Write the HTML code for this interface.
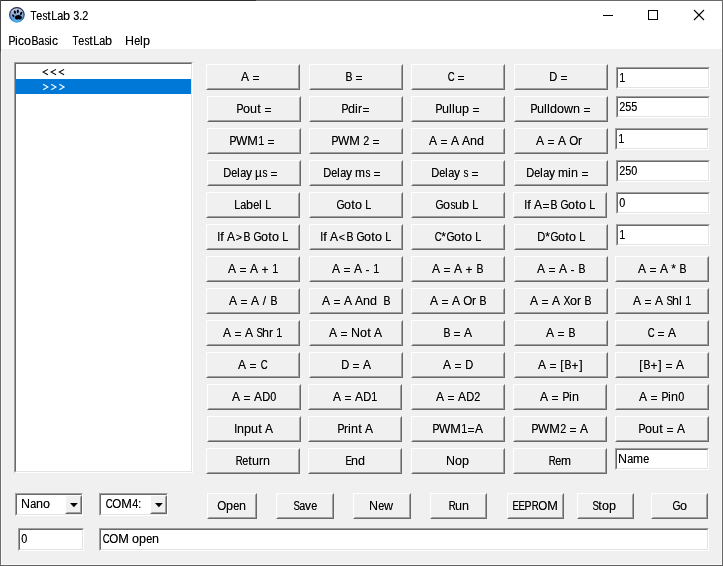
<!DOCTYPE html>
<html><head><meta charset="utf-8"><title>TestLab 3.2</title>
<style>
html,body{margin:0;padding:0;}
body{width:723px;height:566px;overflow:hidden;background:#f0f0f0;font-family:"Liberation Sans",sans-serif;font-size:12px;color:#000;position:relative;}
.abs{position:absolute;}
#win{position:absolute;left:0;top:0;width:723px;height:566px;will-change:transform;}
#title{position:absolute;left:1px;top:1px;width:721px;height:48px;background:#fff;}
.t{position:absolute;white-space:nowrap;line-height:14px;height:14px;text-shadow:0 0 0 rgba(0,0,0,.55);}
b{font-weight:normal;display:inline-block;text-align:center;overflow:visible;white-space:nowrap;}
.c32{width:3px}.c42{width:5px}.c43{width:8px;transform:translateY(0.8px)}.c45{width:5px;transform:translateY(0.8px)}.c46{width:3px;transform:scaleX(0.900)}.c47{width:5px}.c48{width:6px;transform:scaleX(0.899)}.c49{width:6px;transform:scaleX(0.899)}.c50{width:6px;transform:scaleX(0.899)}.c51{width:6px;transform:scaleX(0.899)}.c52{width:6px;transform:scaleX(0.899)}.c53{width:6px;transform:scaleX(0.899)}.c58{width:3px;transform:scaleX(0.900)}.c60{width:8px;transform:translateY(0.7px) scale(0.9)}.c61{width:8px;transform:translateY(0.8px)}.c62{width:8px;transform:translateY(0.7px) scale(0.9)}.c65{width:8px}.c66{width:7px;transform:scaleX(0.875)}.c67{width:7px;transform:scaleX(0.808)}.c68{width:8px;transform:scaleX(0.923)}.c69{width:6px;transform:scaleX(0.800)}.c71{width:8px;transform:scaleX(0.857)}.c72{width:9px;transform:scaleX(1.039)}.c73{width:3px;transform:scaleX(0.900)}.c76{width:6px;transform:scaleX(0.899)}.c77{width:11px;transform:scaleX(1.060)}.c78{width:9px;transform:scaleX(1.039)}.c79{width:9px;transform:scaleX(0.964)}.c80{width:7px;transform:scaleX(0.875)}.c82{width:7px;transform:scaleX(0.808)}.c83{width:6px;transform:scaleX(0.800)}.c84{width:6px;transform:scaleX(0.819)}.c87{width:11px}.c88{width:7px;transform:scaleX(0.875)}.c91{width:4px}.c93{width:4px}.c97{width:6px;transform:scaleX(0.899)}.c98{width:7px;transform:scaleX(1.049)}.c99{width:6px}.c100{width:7px;transform:scaleX(1.049)}.c101{width:6px;transform:scaleX(0.899)}.c102{width:4px;transform:scaleX(1.060)}.c104{width:7px;transform:scaleX(1.049)}.c105{width:3px;transform:scaleX(1.060)}.c108{width:3px;transform:scaleX(1.060)}.c109{width:10px}.c110{width:7px;transform:scaleX(1.049)}.c111{width:7px;transform:scaleX(1.049)}.c112{width:7px;transform:scaleX(1.049)}.c114{width:4px}.c115{width:5px;transform:scaleX(0.833)}.c116{width:4px;transform:scaleX(1.060)}.c117{width:7px;transform:scaleX(1.049)}.c118{width:6px}.c119{width:9px;transform:scaleX(1.039)}.c121{width:6px}.c181{width:7px}
.btn{position:absolute;box-sizing:border-box;background:#f0f0f0;border-top:1px solid #fff;border-left:1px solid #fff;border-right:1px solid #696969;border-bottom:1px solid #696969;}
.btn>i{position:absolute;left:0;top:0;right:0;bottom:0;border-right:1px solid #a0a0a0;border-bottom:1px solid #a0a0a0;border-top:1px solid #f0f0f0;border-left:1px solid #f0f0f0;display:block;}
.edit{position:absolute;box-sizing:border-box;background:#fff;border-top:1px solid #a0a0a0;border-left:1px solid #a0a0a0;border-right:1px solid #fff;border-bottom:1px solid #fff;}
.edit>i{position:absolute;left:0;top:0;right:0;bottom:0;border-top:1px solid #696969;border-left:1px solid #696969;border-right:1px solid #e3e3e3;border-bottom:1px solid #e3e3e3;display:block;}
</style></head><body>
<div id="win">
<div id="title"></div>

<div class="abs" style="left:0;top:0;width:723px;height:1px;background:#6a6a6a"></div>
<div class="abs" style="left:0;top:0;width:256px;height:1px;background:#303030"></div>
<div class="abs" style="left:0;top:0;width:1px;height:566px;background:#6d6d6d"></div>
<div class="abs" style="left:0;top:0;width:1px;height:52px;background:#4a4a4a"></div>
<div class="abs" style="left:1px;top:50px;width:1px;height:515px;background:#fafafa"></div>
<div class="abs" style="left:721px;top:50px;width:1px;height:515px;background:#fafafa"></div>
<div class="abs" style="left:1px;top:564px;width:721px;height:1px;background:#fafafa"></div>
<div class="abs" style="left:722px;top:0;width:1px;height:566px;background:#686868"></div>
<div class="abs" style="left:0;top:565px;width:723px;height:1px;background:#606060"></div>
<svg class="abs" style="left:8px;top:6px" width="18" height="18" viewBox="8 6 18 18">
<defs><linearGradient id="g" x1="0" y1="0" x2="0" y2="1"><stop offset="0" stop-color="#d6dce9"/><stop offset="0.42" stop-color="#93abd4"/><stop offset="0.78" stop-color="#5b9fe0"/><stop offset="1" stop-color="#55c8f6"/></linearGradient>
<linearGradient id="g2" x1="0" y1="0" x2="0" y2="1"><stop offset="0" stop-color="#1a2a4e"/><stop offset="0.6" stop-color="#21437f"/><stop offset="1" stop-color="#3a9fe0"/></linearGradient></defs>
<circle cx="16.9" cy="14.8" r="7.25" fill="url(#g)" stroke="url(#g2)" stroke-width="1.15"/>
<path d="M14.9 17.6C14.9 16 16.6 15.1 18.3 15.1C20.2 15.1 21.9 16.1 21.9 17.6C21.9 19 20.6 19.7 19.6 19.5C19 19.4 18.7 19.2 18.3 19.2C17.9 19.2 17.5 19.5 16.9 19.6C15.8 19.7 14.9 18.9 14.9 17.6Z" fill="#000"/>
<ellipse cx="13.3" cy="15.8" rx="0.95" ry="1.45" fill="#000" transform="rotate(-35 13.3 15.8)"/>
<ellipse cx="14.9" cy="12.1" rx="1.05" ry="1.75" fill="#000" transform="rotate(-12 14.9 12.1)"/>
<ellipse cx="17.8" cy="11.3" rx="1.05" ry="1.8" fill="#000" transform="rotate(6 17.8 11.3)"/>
<ellipse cx="21.1" cy="13.4" rx="1.05" ry="1.6" fill="#000" transform="rotate(30 21.1 13.4)"/>
</svg>
<div class="t" style="left:30px;top:9px;letter-spacing:-0.1px;"><b class="c84">T</b><b class="c101">e</b><b class="c115">s</b><b class="c116">t</b><b class="c76">L</b><b class="c97">a</b><b class="c98">b</b><b class="c32">&nbsp;</b><b class="c51">3</b><b class="c46">.</b><b class="c50">2</b></div>
<svg class="abs" style="left:590px;top:0px" width="132" height="30" viewBox="590 0 132 30">
<path d="M603 15.5H613" stroke="#000" stroke-width="1" fill="none"/>
<rect x="648.5" y="10.5" width="9" height="9" stroke="#000" stroke-width="1" fill="none"/>
<path d="M694 10L704 20M704 10L694 20" stroke="#000" stroke-width="1.1" fill="none"/>
</svg>
<div class="t" style="left:8px;top:34px;"><b class="c80">P</b><b class="c105">i</b><b class="c99">c</b><b class="c111">o</b><b class="c66">B</b><b class="c97">a</b><b class="c115">s</b><b class="c105">i</b><b class="c99">c</b></div>
<div class="t" style="left:72px;top:34px;"><b class="c84">T</b><b class="c101">e</b><b class="c115">s</b><b class="c116">t</b><b class="c76">L</b><b class="c97">a</b><b class="c98">b</b></div>
<div class="t" style="left:125px;top:34px;"><b class="c72">H</b><b class="c101">e</b><b class="c108">l</b><b class="c112">p</b></div>
<div class="edit" style="left:14px;top:62px;width:179px;height:411px;"><i></i></div>
<div class="abs" style="left:16px;top:79px;width:175px;height:14.5px;background:#0078d7"></div>
<svg class="abs" style="left:40px;top:66px" width="30" height="28" viewBox="40 66 30 28" fill="none" stroke-width="1.05" stroke-linecap="butt"><path d="M47.9 69.4L43.1 72.1L47.9 74.8" stroke="#000"/><path d="M43.1 84.3L47.9 87L43.1 89.7" stroke="#fff"/><path d="M56.0 69.4L51.2 72.1L56.0 74.8" stroke="#000"/><path d="M51.2 84.3L56.0 87L51.2 89.7" stroke="#fff"/><path d="M64.1 69.4L59.3 72.1L64.1 74.8" stroke="#000"/><path d="M59.3 84.3L64.1 87L59.3 89.7" stroke="#fff"/></svg>
<div class="btn" style="left:206px;top:64px;width:94px;height:26px;"><i></i></div>
<div class="t" style="left:241px;top:70px;"><b class="c65">A</b><b class="c32">&nbsp;</b><b class="c61">=</b></div>
<div class="btn" style="left:309px;top:64px;width:94px;height:26px;"><i></i></div>
<div class="t" style="left:345px;top:70px;"><b class="c66">B</b><b class="c32">&nbsp;</b><b class="c61">=</b></div>
<div class="btn" style="left:411px;top:64px;width:94px;height:26px;"><i></i></div>
<div class="t" style="left:447px;top:70px;"><b class="c67">C</b><b class="c32">&nbsp;</b><b class="c61">=</b></div>
<div class="btn" style="left:514px;top:64px;width:94px;height:26px;"><i></i></div>
<div class="t" style="left:549px;top:70px;"><b class="c68">D</b><b class="c32">&nbsp;</b><b class="c61">=</b></div>
<div class="edit" style="left:616px;top:67px;width:94px;height:22px;"><i></i></div>
<div class="t" style="left:619px;top:71px;"><b class="c49">1</b></div>
<div class="btn" style="left:207px;top:96px;width:94px;height:26px;"><i></i></div>
<div class="t" style="left:236px;top:102px;"><b class="c80">P</b><b class="c111">o</b><b class="c117">u</b><b class="c116">t</b><b class="c32">&nbsp;</b><b class="c61">=</b></div>
<div class="btn" style="left:309px;top:96px;width:94px;height:26px;"><i></i></div>
<div class="t" style="left:341px;top:102px;"><b class="c80">P</b><b class="c100">d</b><b class="c105">i</b><b class="c114">r</b><b class="c61">=</b></div>
<div class="btn" style="left:411px;top:96px;width:94px;height:26px;"><i></i></div>
<div class="t" style="left:435px;top:102px;"><b class="c80">P</b><b class="c117">u</b><b class="c108">l</b><b class="c108">l</b><b class="c117">u</b><b class="c112">p</b><b class="c32">&nbsp;</b><b class="c61">=</b></div>
<div class="btn" style="left:514px;top:96px;width:94px;height:26px;"><i></i></div>
<div class="t" style="left:530px;top:102px;"><b class="c80">P</b><b class="c117">u</b><b class="c108">l</b><b class="c108">l</b><b class="c100">d</b><b class="c111">o</b><b class="c119">w</b><b class="c110">n</b><b class="c32">&nbsp;</b><b class="c61">=</b></div>
<div class="edit" style="left:616px;top:96px;width:94px;height:22px;"><i></i></div>
<div class="t" style="left:619px;top:100px;"><b class="c50">2</b><b class="c53">5</b><b class="c53">5</b></div>
<div class="btn" style="left:207px;top:128px;width:94px;height:26px;"><i></i></div>
<div class="t" style="left:229px;top:134px;"><b class="c80">P</b><b class="c87">W</b><b class="c77">M</b><b class="c49">1</b><b class="c32">&nbsp;</b><b class="c61">=</b></div>
<div class="btn" style="left:309px;top:128px;width:94px;height:26px;"><i></i></div>
<div class="t" style="left:331px;top:134px;"><b class="c80">P</b><b class="c87">W</b><b class="c77">M</b><b class="c32">&nbsp;</b><b class="c50">2</b><b class="c32">&nbsp;</b><b class="c61">=</b></div>
<div class="btn" style="left:411px;top:128px;width:94px;height:26px;"><i></i></div>
<div class="t" style="left:429px;top:134px;"><b class="c65">A</b><b class="c32">&nbsp;</b><b class="c61">=</b><b class="c32">&nbsp;</b><b class="c65">A</b><b class="c32">&nbsp;</b><b class="c65">A</b><b class="c110">n</b><b class="c100">d</b></div>
<div class="btn" style="left:514px;top:128px;width:94px;height:26px;"><i></i></div>
<div class="t" style="left:536px;top:134px;"><b class="c65">A</b><b class="c32">&nbsp;</b><b class="c61">=</b><b class="c32">&nbsp;</b><b class="c65">A</b><b class="c32">&nbsp;</b><b class="c79">O</b><b class="c114">r</b></div>
<div class="edit" style="left:615px;top:128px;width:94px;height:22px;"><i></i></div>
<div class="t" style="left:618px;top:132px;"><b class="c49">1</b></div>
<div class="btn" style="left:207px;top:160px;width:94px;height:26px;"><i></i></div>
<div class="t" style="left:223px;top:166px;"><b class="c68">D</b><b class="c101">e</b><b class="c108">l</b><b class="c97">a</b><b class="c121">y</b><b class="c32">&nbsp;</b><b class="c181">µ</b><b class="c115">s</b><b class="c32">&nbsp;</b><b class="c61">=</b></div>
<div class="btn" style="left:309px;top:160px;width:94px;height:26px;"><i></i></div>
<div class="t" style="left:323px;top:166px;"><b class="c68">D</b><b class="c101">e</b><b class="c108">l</b><b class="c97">a</b><b class="c121">y</b><b class="c32">&nbsp;</b><b class="c109">m</b><b class="c115">s</b><b class="c32">&nbsp;</b><b class="c61">=</b></div>
<div class="btn" style="left:411px;top:160px;width:94px;height:26px;"><i></i></div>
<div class="t" style="left:431px;top:166px;"><b class="c68">D</b><b class="c101">e</b><b class="c108">l</b><b class="c97">a</b><b class="c121">y</b><b class="c32">&nbsp;</b><b class="c115">s</b><b class="c32">&nbsp;</b><b class="c61">=</b></div>
<div class="btn" style="left:514px;top:160px;width:94px;height:26px;"><i></i></div>
<div class="t" style="left:526px;top:166px;"><b class="c68">D</b><b class="c101">e</b><b class="c108">l</b><b class="c97">a</b><b class="c121">y</b><b class="c32">&nbsp;</b><b class="c109">m</b><b class="c105">i</b><b class="c110">n</b><b class="c32">&nbsp;</b><b class="c61">=</b></div>
<div class="edit" style="left:616px;top:160px;width:94px;height:22px;"><i></i></div>
<div class="t" style="left:619px;top:164px;"><b class="c50">2</b><b class="c53">5</b><b class="c48">0</b></div>
<div class="btn" style="left:206px;top:192px;width:94px;height:26px;"><i></i></div>
<div class="t" style="left:234px;top:198px;"><b class="c76">L</b><b class="c97">a</b><b class="c98">b</b><b class="c101">e</b><b class="c108">l</b><b class="c32">&nbsp;</b><b class="c76">L</b></div>
<div class="btn" style="left:309px;top:192px;width:94px;height:26px;"><i></i></div>
<div class="t" style="left:336px;top:198px;"><b class="c71">G</b><b class="c111">o</b><b class="c116">t</b><b class="c111">o</b><b class="c32">&nbsp;</b><b class="c76">L</b></div>
<div class="btn" style="left:411px;top:192px;width:94px;height:26px;"><i></i></div>
<div class="t" style="left:435px;top:198px;"><b class="c71">G</b><b class="c111">o</b><b class="c115">s</b><b class="c117">u</b><b class="c98">b</b><b class="c32">&nbsp;</b><b class="c76">L</b></div>
<div class="btn" style="left:513px;top:192px;width:94px;height:26px;"><i></i></div>
<div class="t" style="left:524px;top:198px;"><b class="c73">I</b><b class="c102">f</b><b class="c32">&nbsp;</b><b class="c65">A</b><b class="c61">=</b><b class="c66">B</b><b class="c32">&nbsp;</b><b class="c71">G</b><b class="c111">o</b><b class="c116">t</b><b class="c111">o</b><b class="c32">&nbsp;</b><b class="c76">L</b></div>
<div class="edit" style="left:616px;top:192px;width:94px;height:22px;"><i></i></div>
<div class="t" style="left:619px;top:196px;"><b class="c48">0</b></div>
<div class="btn" style="left:206px;top:224px;width:94px;height:26px;"><i></i></div>
<div class="t" style="left:217px;top:230px;"><b class="c73">I</b><b class="c102">f</b><b class="c32">&nbsp;</b><b class="c65">A</b><b class="c62">&gt;</b><b class="c66">B</b><b class="c32">&nbsp;</b><b class="c71">G</b><b class="c111">o</b><b class="c116">t</b><b class="c111">o</b><b class="c32">&nbsp;</b><b class="c76">L</b></div>
<div class="btn" style="left:309px;top:224px;width:94px;height:26px;"><i></i></div>
<div class="t" style="left:320px;top:230px;"><b class="c73">I</b><b class="c102">f</b><b class="c32">&nbsp;</b><b class="c65">A</b><b class="c60">&lt;</b><b class="c66">B</b><b class="c32">&nbsp;</b><b class="c71">G</b><b class="c111">o</b><b class="c116">t</b><b class="c111">o</b><b class="c32">&nbsp;</b><b class="c76">L</b></div>
<div class="btn" style="left:411px;top:224px;width:94px;height:26px;"><i></i></div>
<div class="t" style="left:434px;top:230px;"><b class="c67">C</b><b class="c42">*</b><b class="c71">G</b><b class="c111">o</b><b class="c116">t</b><b class="c111">o</b><b class="c32">&nbsp;</b><b class="c76">L</b></div>
<div class="btn" style="left:514px;top:224px;width:94px;height:26px;"><i></i></div>
<div class="t" style="left:537px;top:230px;"><b class="c68">D</b><b class="c42">*</b><b class="c71">G</b><b class="c111">o</b><b class="c116">t</b><b class="c111">o</b><b class="c32">&nbsp;</b><b class="c76">L</b></div>
<div class="edit" style="left:616px;top:224px;width:94px;height:22px;"><i></i></div>
<div class="t" style="left:619px;top:228px;"><b class="c49">1</b></div>
<div class="btn" style="left:206px;top:256px;width:94px;height:26px;"><i></i></div>
<div class="t" style="left:228px;top:262px;"><b class="c65">A</b><b class="c32">&nbsp;</b><b class="c61">=</b><b class="c32">&nbsp;</b><b class="c65">A</b><b class="c32">&nbsp;</b><b class="c43">+</b><b class="c32">&nbsp;</b><b class="c49">1</b></div>
<div class="btn" style="left:309px;top:256px;width:94px;height:26px;"><i></i></div>
<div class="t" style="left:332px;top:262px;"><b class="c65">A</b><b class="c32">&nbsp;</b><b class="c61">=</b><b class="c32">&nbsp;</b><b class="c65">A</b><b class="c32">&nbsp;</b><b class="c45">-</b><b class="c32">&nbsp;</b><b class="c49">1</b></div>
<div class="btn" style="left:411px;top:256px;width:94px;height:26px;"><i></i></div>
<div class="t" style="left:432px;top:262px;"><b class="c65">A</b><b class="c32">&nbsp;</b><b class="c61">=</b><b class="c32">&nbsp;</b><b class="c65">A</b><b class="c32">&nbsp;</b><b class="c43">+</b><b class="c32">&nbsp;</b><b class="c66">B</b></div>
<div class="btn" style="left:514px;top:256px;width:94px;height:26px;"><i></i></div>
<div class="t" style="left:537px;top:262px;"><b class="c65">A</b><b class="c32">&nbsp;</b><b class="c61">=</b><b class="c32">&nbsp;</b><b class="c65">A</b><b class="c32">&nbsp;</b><b class="c45">-</b><b class="c32">&nbsp;</b><b class="c66">B</b></div>
<div class="btn" style="left:615px;top:256px;width:94px;height:26px;"><i></i></div>
<div class="t" style="left:638px;top:262px;"><b class="c65">A</b><b class="c32">&nbsp;</b><b class="c61">=</b><b class="c32">&nbsp;</b><b class="c65">A</b><b class="c32">&nbsp;</b><b class="c42">*</b><b class="c32">&nbsp;</b><b class="c66">B</b></div>
<div class="btn" style="left:206px;top:288px;width:94px;height:26px;"><i></i></div>
<div class="t" style="left:229px;top:294px;"><b class="c65">A</b><b class="c32">&nbsp;</b><b class="c61">=</b><b class="c32">&nbsp;</b><b class="c65">A</b><b class="c32">&nbsp;</b><b class="c47">/</b><b class="c32">&nbsp;</b><b class="c66">B</b></div>
<div class="btn" style="left:309px;top:288px;width:94px;height:26px;"><i></i></div>
<div class="t" style="left:322px;top:294px;"><b class="c65">A</b><b class="c32">&nbsp;</b><b class="c61">=</b><b class="c32">&nbsp;</b><b class="c65">A</b><b class="c32">&nbsp;</b><b class="c65">A</b><b class="c110">n</b><b class="c100">d</b><b class="c32">&nbsp;</b><b class="c32">&nbsp;</b><b class="c66">B</b></div>
<div class="btn" style="left:411px;top:288px;width:94px;height:26px;"><i></i></div>
<div class="t" style="left:430px;top:294px;"><b class="c65">A</b><b class="c32">&nbsp;</b><b class="c61">=</b><b class="c32">&nbsp;</b><b class="c65">A</b><b class="c32">&nbsp;</b><b class="c79">O</b><b class="c114">r</b><b class="c32">&nbsp;</b><b class="c66">B</b></div>
<div class="btn" style="left:514px;top:288px;width:94px;height:26px;"><i></i></div>
<div class="t" style="left:530px;top:294px;"><b class="c65">A</b><b class="c32">&nbsp;</b><b class="c61">=</b><b class="c32">&nbsp;</b><b class="c65">A</b><b class="c32">&nbsp;</b><b class="c88">X</b><b class="c111">o</b><b class="c114">r</b><b class="c32">&nbsp;</b><b class="c66">B</b></div>
<div class="btn" style="left:615px;top:288px;width:94px;height:26px;"><i></i></div>
<div class="t" style="left:633px;top:294px;"><b class="c65">A</b><b class="c32">&nbsp;</b><b class="c61">=</b><b class="c32">&nbsp;</b><b class="c65">A</b><b class="c32">&nbsp;</b><b class="c83">S</b><b class="c104">h</b><b class="c108">l</b><b class="c32">&nbsp;</b><b class="c49">1</b></div>
<div class="btn" style="left:206px;top:320px;width:94px;height:26px;"><i></i></div>
<div class="t" style="left:223px;top:326px;"><b class="c65">A</b><b class="c32">&nbsp;</b><b class="c61">=</b><b class="c32">&nbsp;</b><b class="c65">A</b><b class="c32">&nbsp;</b><b class="c83">S</b><b class="c104">h</b><b class="c114">r</b><b class="c32">&nbsp;</b><b class="c49">1</b></div>
<div class="btn" style="left:309px;top:320px;width:94px;height:26px;"><i></i></div>
<div class="t" style="left:329px;top:326px;"><b class="c65">A</b><b class="c32">&nbsp;</b><b class="c61">=</b><b class="c32">&nbsp;</b><b class="c78">N</b><b class="c111">o</b><b class="c116">t</b><b class="c32">&nbsp;</b><b class="c65">A</b></div>
<div class="btn" style="left:411px;top:320px;width:94px;height:26px;"><i></i></div>
<div class="t" style="left:443px;top:326px;"><b class="c66">B</b><b class="c32">&nbsp;</b><b class="c61">=</b><b class="c32">&nbsp;</b><b class="c65">A</b></div>
<div class="btn" style="left:514px;top:320px;width:94px;height:26px;"><i></i></div>
<div class="t" style="left:546px;top:326px;"><b class="c65">A</b><b class="c32">&nbsp;</b><b class="c61">=</b><b class="c32">&nbsp;</b><b class="c66">B</b></div>
<div class="btn" style="left:615px;top:320px;width:94px;height:26px;"><i></i></div>
<div class="t" style="left:647px;top:326px;"><b class="c67">C</b><b class="c32">&nbsp;</b><b class="c61">=</b><b class="c32">&nbsp;</b><b class="c65">A</b></div>
<div class="btn" style="left:206px;top:352px;width:94px;height:26px;"><i></i></div>
<div class="t" style="left:238px;top:358px;"><b class="c65">A</b><b class="c32">&nbsp;</b><b class="c61">=</b><b class="c32">&nbsp;</b><b class="c67">C</b></div>
<div class="btn" style="left:309px;top:352px;width:94px;height:26px;"><i></i></div>
<div class="t" style="left:341px;top:358px;"><b class="c68">D</b><b class="c32">&nbsp;</b><b class="c61">=</b><b class="c32">&nbsp;</b><b class="c65">A</b></div>
<div class="btn" style="left:411px;top:352px;width:94px;height:26px;"><i></i></div>
<div class="t" style="left:443px;top:358px;"><b class="c65">A</b><b class="c32">&nbsp;</b><b class="c61">=</b><b class="c32">&nbsp;</b><b class="c68">D</b></div>
<div class="btn" style="left:514px;top:352px;width:94px;height:26px;"><i></i></div>
<div class="t" style="left:538px;top:358px;"><b class="c65">A</b><b class="c32">&nbsp;</b><b class="c61">=</b><b class="c32">&nbsp;</b><b class="c91">[</b><b class="c66">B</b><b class="c43">+</b><b class="c93">]</b></div>
<div class="btn" style="left:615px;top:352px;width:94px;height:26px;"><i></i></div>
<div class="t" style="left:639px;top:358px;"><b class="c91">[</b><b class="c66">B</b><b class="c43">+</b><b class="c93">]</b><b class="c32">&nbsp;</b><b class="c61">=</b><b class="c32">&nbsp;</b><b class="c65">A</b></div>
<div class="btn" style="left:207px;top:384px;width:94px;height:26px;"><i></i></div>
<div class="t" style="left:232px;top:390px;"><b class="c65">A</b><b class="c32">&nbsp;</b><b class="c61">=</b><b class="c32">&nbsp;</b><b class="c65">A</b><b class="c68">D</b><b class="c48">0</b></div>
<div class="btn" style="left:308px;top:384px;width:94px;height:26px;"><i></i></div>
<div class="t" style="left:333px;top:390px;"><b class="c65">A</b><b class="c32">&nbsp;</b><b class="c61">=</b><b class="c32">&nbsp;</b><b class="c65">A</b><b class="c68">D</b><b class="c49">1</b></div>
<div class="btn" style="left:411px;top:384px;width:94px;height:26px;"><i></i></div>
<div class="t" style="left:436px;top:390px;"><b class="c65">A</b><b class="c32">&nbsp;</b><b class="c61">=</b><b class="c32">&nbsp;</b><b class="c65">A</b><b class="c68">D</b><b class="c50">2</b></div>
<div class="btn" style="left:513px;top:384px;width:94px;height:26px;"><i></i></div>
<div class="t" style="left:540px;top:390px;"><b class="c65">A</b><b class="c32">&nbsp;</b><b class="c61">=</b><b class="c32">&nbsp;</b><b class="c80">P</b><b class="c105">i</b><b class="c110">n</b></div>
<div class="btn" style="left:615px;top:384px;width:94px;height:26px;"><i></i></div>
<div class="t" style="left:639px;top:390px;"><b class="c65">A</b><b class="c32">&nbsp;</b><b class="c61">=</b><b class="c32">&nbsp;</b><b class="c80">P</b><b class="c105">i</b><b class="c110">n</b><b class="c48">0</b></div>
<div class="btn" style="left:207px;top:416px;width:94px;height:26px;"><i></i></div>
<div class="t" style="left:234px;top:422px;"><b class="c73">I</b><b class="c110">n</b><b class="c112">p</b><b class="c117">u</b><b class="c116">t</b><b class="c32">&nbsp;</b><b class="c65">A</b></div>
<div class="btn" style="left:308px;top:416px;width:94px;height:26px;"><i></i></div>
<div class="t" style="left:337px;top:422px;"><b class="c80">P</b><b class="c114">r</b><b class="c105">i</b><b class="c110">n</b><b class="c116">t</b><b class="c32">&nbsp;</b><b class="c65">A</b></div>
<div class="btn" style="left:411px;top:416px;width:94px;height:26px;"><i></i></div>
<div class="t" style="left:432px;top:422px;"><b class="c80">P</b><b class="c87">W</b><b class="c77">M</b><b class="c49">1</b><b class="c61">=</b><b class="c65">A</b></div>
<div class="btn" style="left:513px;top:416px;width:94px;height:26px;"><i></i></div>
<div class="t" style="left:531px;top:422px;"><b class="c80">P</b><b class="c87">W</b><b class="c77">M</b><b class="c50">2</b><b class="c32">&nbsp;</b><b class="c61">=</b><b class="c32">&nbsp;</b><b class="c65">A</b></div>
<div class="btn" style="left:615px;top:416px;width:94px;height:26px;"><i></i></div>
<div class="t" style="left:638px;top:422px;"><b class="c80">P</b><b class="c111">o</b><b class="c117">u</b><b class="c116">t</b><b class="c32">&nbsp;</b><b class="c61">=</b><b class="c32">&nbsp;</b><b class="c65">A</b></div>
<div class="btn" style="left:206px;top:448px;width:94px;height:26px;"><i></i></div>
<div class="t" style="left:235px;top:454px;"><b class="c82">R</b><b class="c101">e</b><b class="c116">t</b><b class="c117">u</b><b class="c114">r</b><b class="c110">n</b></div>
<div class="btn" style="left:308px;top:448px;width:94px;height:26px;"><i></i></div>
<div class="t" style="left:345px;top:454px;"><b class="c69">E</b><b class="c110">n</b><b class="c100">d</b></div>
<div class="btn" style="left:411px;top:448px;width:94px;height:26px;"><i></i></div>
<div class="t" style="left:446px;top:454px;"><b class="c78">N</b><b class="c111">o</b><b class="c112">p</b></div>
<div class="btn" style="left:513px;top:448px;width:94px;height:26px;"><i></i></div>
<div class="t" style="left:548px;top:454px;"><b class="c82">R</b><b class="c101">e</b><b class="c109">m</b></div>
<div class="edit" style="left:615px;top:448px;width:94px;height:22px;"><i></i></div>
<div class="t" style="left:618px;top:452px;"><b class="c78">N</b><b class="c97">a</b><b class="c109">m</b><b class="c101">e</b></div>
<div class="btn" style="left:207px;top:493px;width:50px;height:26px;"><i></i></div>
<div class="t" style="left:217px;top:499px;"><b class="c79">O</b><b class="c112">p</b><b class="c101">e</b><b class="c110">n</b></div>
<div class="btn" style="left:276px;top:493px;width:58px;height:26px;"><i></i></div>
<div class="t" style="left:293px;top:499px;"><b class="c83">S</b><b class="c97">a</b><b class="c118">v</b><b class="c101">e</b></div>
<div class="btn" style="left:353px;top:493px;width:58px;height:26px;"><i></i></div>
<div class="t" style="left:369px;top:499px;"><b class="c78">N</b><b class="c101">e</b><b class="c119">w</b></div>
<div class="btn" style="left:430px;top:493px;width:57px;height:26px;"><i></i></div>
<div class="t" style="left:448px;top:499px;"><b class="c82">R</b><b class="c117">u</b><b class="c110">n</b></div>
<div class="btn" style="left:507px;top:493px;width:57px;height:26px;"><i></i></div>
<div class="t" style="left:512px;top:499px;"><b class="c69">E</b><b class="c69">E</b><b class="c80">P</b><b class="c82">R</b><b class="c79">O</b><b class="c77">M</b></div>
<div class="btn" style="left:577px;top:493px;width:57px;height:26px;"><i></i></div>
<div class="t" style="left:592px;top:499px;"><b class="c83">S</b><b class="c116">t</b><b class="c111">o</b><b class="c112">p</b></div>
<div class="btn" style="left:651px;top:493px;width:57px;height:26px;"><i></i></div>
<div class="t" style="left:672px;top:499px;"><b class="c71">G</b><b class="c111">o</b></div>
<div class="edit" style="left:15px;top:493px;width:68px;height:23px;"><i></i><div class="btn" style="left:49px;top:1px;width:17px;height:19px;"><i></i><svg style="position:absolute;left:3.5px;top:6.8px" width="9" height="5" viewBox="0 0 9 5"><path d="M0 0H7.8L3.9 4.3Z" fill="#000"/></svg></div></div><div class="t" style="left:21px;top:497px;"><b class="c78">N</b><b class="c97">a</b><b class="c110">n</b><b class="c111">o</b></div>
<div class="edit" style="left:99px;top:493px;width:69px;height:23px;"><i></i><div class="btn" style="left:50px;top:1px;width:17px;height:19px;"><i></i><svg style="position:absolute;left:3.5px;top:6.8px" width="9" height="5" viewBox="0 0 9 5"><path d="M0 0H7.8L3.9 4.3Z" fill="#000"/></svg></div></div><div class="t" style="left:105px;top:497px;"><b class="c67">C</b><b class="c79">O</b><b class="c77">M</b><b class="c52">4</b><b class="c58">:</b></div>
<div class="edit" style="left:18px;top:528px;width:66px;height:23px;"><i></i></div>
<div class="t" style="left:21px;top:532px;"><b class="c48">0</b></div>
<div class="edit" style="left:99px;top:528px;width:610px;height:23px;"><i></i></div>
<div class="t" style="left:102px;top:532px;"><b class="c67">C</b><b class="c79">O</b><b class="c77">M</b><b class="c32">&nbsp;</b><b class="c111">o</b><b class="c112">p</b><b class="c101">e</b><b class="c110">n</b></div>
</div></body></html>
